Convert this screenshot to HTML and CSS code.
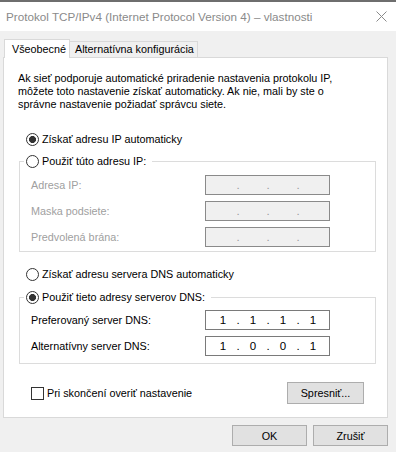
FILE: index.html
```html
<!DOCTYPE html>
<html lang="sk">
<head>
    <meta charset="UTF-8">
    <meta name="viewport" content="width=device-width, initial-scale=1.0">
    <title>Protokol TCP/IPv4 – vlastnosti</title>
    <link rel="stylesheet" href="styles.css">
</head>
<body>
    <!-- Okno dialógu -->
    <div class="window">
        <div class="titlebar">
            <span class="title">Protokol TCP/IPv4 (Internet Protocol Version 4) – vlastnosti</span>
            <svg class="close" width="11" height="11" viewBox="0 0 11 11">
                <path d="M0.5 0.5 L10.5 10.5 M10.5 0.5 L0.5 10.5" stroke="#8a8a8a" stroke-width="1" fill="none"/>
            </svg>
        </div>

        <!-- Karty -->
        <div class="tabs">
            <span class="tab active">Všeobecné</span>
            <span class="tab">Alternatívna konfigurácia</span>
        </div>

        <div class="panel">
            <p class="intro">Ak sieť podporuje automatické priradenie nastavenia protokolu IP,<br>
                môžete toto nastavenie získať automaticky. Ak nie, mali by ste o<br>
                správne nastavenie požiadať správcu siete.</p>

            <label class="option first">
                <input type="radio" name="ip" checked> Získať adresu IP automaticky
            </label>

            <fieldset class="group disabled">
                <legend>
                    <label class="option"><input type="radio" name="ip"> Použiť túto adresu IP:</label>
                </legend>
                <div class="field-row">
                    <span class="field-label">Adresa IP:</span>
                    <div class="ip-box"><span class="seg"></span><span class="dot">.</span><span class="seg"></span><span class="dot">.</span><span class="seg"></span><span class="dot">.</span><span class="seg"></span></div>
                </div>
                <div class="field-row">
                    <span class="field-label">Maska podsiete:</span>
                    <div class="ip-box"><span class="seg"></span><span class="dot">.</span><span class="seg"></span><span class="dot">.</span><span class="seg"></span><span class="dot">.</span><span class="seg"></span></div>
                </div>
                <div class="field-row">
                    <span class="field-label">Predvolená brána:</span>
                    <div class="ip-box"><span class="seg"></span><span class="dot">.</span><span class="seg"></span><span class="dot">.</span><span class="seg"></span><span class="dot">.</span><span class="seg"></span></div>
                </div>
            </fieldset>

            <label class="option dns-auto">
                <input type="radio" name="dns"> Získať adresu servera DNS automaticky
            </label>

            <fieldset class="group dns">
                <legend>
                    <label class="option"><input type="radio" name="dns" checked> Použiť tieto adresy serverov DNS:</label>
                </legend>
                <div class="field-row">
                    <span class="field-label">Preferovaný server DNS:</span>
                    <div class="ip-box"><span class="seg">1</span><span class="dot">.</span><span class="seg">1</span><span class="dot">.</span><span class="seg">1</span><span class="dot">.</span><span class="seg">1</span></div>
                </div>
                <div class="field-row">
                    <span class="field-label">Alternatívny server DNS:</span>
                    <div class="ip-box"><span class="seg">1</span><span class="dot">.</span><span class="seg">0</span><span class="dot">.</span><span class="seg">0</span><span class="dot">.</span><span class="seg">1</span></div>
                </div>
            </fieldset>

            <div class="footer-row">
                <label class="check"><input type="checkbox"> Pri skončení overiť nastavenie</label>
                <button class="btn advanced">Spresniť...</button>
            </div>
        </div>

        <!-- Tlačidlá -->
        <div class="actions">
            <button class="btn">OK</button>
            <button class="btn">Zrušiť</button>
        </div>
    </div>
</body>
</html>
```
FILE: styles.css
```css
/* Celé okno */
body {
    margin: 0;
    background-color: #f0f0f0;
    font-family: "Liberation Sans", Arial, sans-serif;
    font-size: 10.8px;
    color: #000;
}

.window {
    width: 396px;
    height: 452px;
    overflow: hidden;
}

/* Titulok */
.titlebar {
    height: 29px;
    background-color: #fff;
    border-top: 2px solid #6e6e6e;
    display: flex;
    align-items: center;
    justify-content: space-between;
    padding: 0 9px 0 6px;
}

.title {
    font-size: 11.7px;
    color: #8a8a8a;
}

.close {
    display: block;
}

/* Karty */
.tabs {
    display: flex;
    align-items: flex-end;
    margin: 8px 0 -1px 4px;
    position: relative;
    z-index: 1;
}

.tab {
    box-sizing: border-box;
    border: 1px solid #d9d9d9;
    border-bottom: none;
    line-height: 15px;
    padding-left: 6px;
}

.tab.active {
    width: 66px;
    height: 19px;
    background-color: #fff;
    padding-top: 2px;
    padding-left: 7px;
}

.tab:not(.active) {
    width: 128px;
    height: 16px;
    margin-bottom: 1px;
    border-left: none;
    padding-left: 5px;
}

/* Panel */
.panel {
    box-sizing: border-box;
    width: 385px;
    height: 361px;
    margin-left: 3px;
    background-color: #fff;
    border: 1px solid #d9d9d9;
    padding: 14px 10px 0 14px;
}

.intro {
    margin: 0;
    line-height: 13px;
    white-space: nowrap;
}

.option {
    display: flex;
    align-items: center;
    height: 16px;
    white-space: nowrap;
}

.option.first {
    margin: 20px 0 0 8px;
}

.option.dns-auto {
    margin: 14px 0 0 8px;
}

input[type="radio"],
input[type="checkbox"] {
    appearance: none;
    margin: 0 3px 0 0;
    width: 13px;
    height: 13px;
    border: 1px solid #333;
    background-color: #fff;
    flex: none;
}

input[type="radio"] {
    border-radius: 50%;
}

input[type="radio"]:checked {
    background: radial-gradient(circle, #333 0, #333 3.2px, #fff 3.8px);
}

/* Skupiny */
.group {
    margin: 6px 1px 0 1px;
    padding: 6px 0 4px 0;
    border: 1px solid #dcdcdc;
}

.group.dns {
    margin-top: 7px;
    padding-top: 5px;
    padding-bottom: 7px;
}

.group legend {
    margin-left: 4px;
    padding: 0 6px 0 2px;
}

.field-row {
    display: flex;
    align-items: center;
    height: 20px;
    margin-bottom: 6px;
    padding-left: 11px;
}

.field-row:last-child {
    margin-bottom: 0;
}

.field-label {
    width: 174px;
}

.disabled .field-label {
    color: #a0a0a0;
}

.ip-box {
    box-sizing: border-box;
    width: 125px;
    height: 20px;
    border: 1px solid #7a7a7a;
    background-color: #fff;
    display: flex;
    align-items: center;
    padding-left: 5px;
    font-size: 11.5px;
}

.disabled .ip-box {
    background-color: #f0f0f0;
    border-color: #8a8a8a;
    color: #9a9a9a;
}

.seg {
    width: 24px;
    text-align: center;
}

.dot {
    width: 6px;
    text-align: center;
}

/* Spodný riadok */
.footer-row {
    display: flex;
    align-items: center;
    justify-content: space-between;
    margin: 18px 13px 0 13px;
}

.check {
    display: flex;
    align-items: center;
    white-space: nowrap;
}

.check input {
    border-radius: 0;
    margin-right: 3px;
}

.btn {
    box-sizing: border-box;
    width: 75px;
    height: 21px;
    background-color: #e1e1e1;
    border: 1px solid #adadad;
    font-family: inherit;
    font-size: 10.8px;
    color: #000;
    padding: 0;
}

.btn.advanced {
    width: 77px;
    height: 22px;
}

/* Tlačidlá OK / Zrušiť */
.actions {
    display: flex;
    justify-content: flex-end;
    gap: 6px;
    margin-top: 7px;
    padding-right: 8px;
}
```
